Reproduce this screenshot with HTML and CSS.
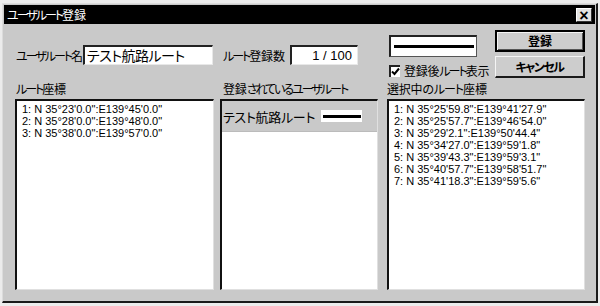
FILE: index.html
```html
<!DOCTYPE html>
<html lang="ja">
<head>
<meta charset="utf-8">
<link rel="stylesheet" href="styles.css">
</head>
<body>
<div class="window">
  <div class="titlebar">
    <span class="title"><span class="kana">ユーザルート</span>登録</span>
    <span class="close">×</span>
  </div>
  <div class="content">
    <div class="top">
      <div class="col col1 field">
        <span class="label"><span class="kana">ユーザルート</span>名</span>
        <div class="input name-input">テスト航路ルート</div>
      </div>
      <div class="col col2 field">
        <span class="label"><span class="kana">ルート</span>登録数</span>
        <div class="input count-input">1 / 100</div>
      </div>
      <div class="col col3 actions">
        <div class="preview-group">
          <div class="preview"><div class="line"></div></div>
          <label class="check"><span class="box">
            <svg width="9" height="9" viewBox="0 0 9 9"><path d="M1 4.5 L3.5 7 L8 1.5" fill="none" stroke="#000" stroke-width="2"/></svg>
          </span>登録後<span class="kana">ルート</span>表示</label>
        </div>
        <div class="buttons">
          <div class="btn default">登録</div>
          <div class="btn"><span class="kana-btn">キャンセル</span></div>
        </div>
      </div>
    </div>
    <div class="labels">
      <div class="col col1 label"><span class="kana">ルート</span>座標</div>
      <div class="col col2 label">登録<span class="kana">されているユーザルート</span></div>
      <div class="col col3 label">選択中の<span class="kana-soft">ルート</span>座標</div>
    </div>
    <div class="lists">
      <div class="col col1 list coords">
        <div>1: N 35°23'0.0":E139°45'0.0"</div>
        <div>2: N 35°28'0.0":E139°48'0.0"</div>
        <div>3: N 35°38'0.0":E139°57'0.0"</div>
      </div>
      <div class="col col2 list routes">
        <div class="route-item selected">
          <span class="route-name">テスト航路ルート</span>
          <span class="swatch"><span class="swatch-line"></span></span>
        </div>
      </div>
      <div class="col col3 list coords">
        <div>1: N 35°25'59.8":E139°41'27.9"</div>
        <div>2: N 35°25'57.7":E139°46'54.0"</div>
        <div>3: N 35°29'2.1":E139°50'44.4"</div>
        <div>4: N 35°34'27.0":E139°59'1.8"</div>
        <div>5: N 35°39'43.3":E139°59'3.1"</div>
        <div>6: N 35°40'57.7":E139°58'51.7"</div>
        <div>7: N 35°41'18.3":E139°59'5.6"</div>
      </div>
    </div>
  </div>
</div>
</body>
</html>
```

FILE: styles.css
```css
html, body {
  margin: 0;
  padding: 0;
}
body {
  background: #ececec;
  font-family: "Noto Sans CJK JP", "Liberation Sans", sans-serif;
  font-size: 12px;
  color: #000;
  width: 600px;
  height: 306px;
  overflow: hidden;
}
.window {
  box-sizing: border-box;
  margin: 3px 0 0 2px;
  width: 596px;
  height: 300px;
  background: #c9c9c9;
  border-left: 1px solid #dcdcdc;
  border-top: 1px solid #dcdcdc;
  border-right: 2px solid #1a1a1a;
  border-bottom: 2px solid #1a1a1a;
}
.titlebar {
  margin: 1px 1px 0 1px;
  height: 19px;
  background: #000;
  color: #fff;
  display: flex;
  align-items: center;
  justify-content: space-between;
  padding: 0 3px 0 3px;
}
.title {
  font-feature-settings: "palt";
  font-size: 12px;
  line-height: 18px;
}
.kana {
  letter-spacing: -2px;
}
.kana-soft {
  letter-spacing: -1px;
}
.kana-btn {
  letter-spacing: -1.5px;
}
.close {
  box-sizing: border-box;
  width: 16px;
  height: 14px;
  background: #e2e2e2;
  color: #000;
  font-family: "Liberation Sans", sans-serif;
  font-weight: bold;
  font-size: 16px;
  line-height: 13px;
  text-align: center;
  border-top: 1px solid #fff;
  border-left: 1px solid #fff;
  border-right: 1px solid #333;
  border-bottom: 1px solid #333;
}
.content {
  padding: 6px 0 0 12px;
}
.top, .labels, .lists {
  display: flex;
}
.col1 { width: 199px; }
.col2 { width: 158px; margin-left: 6px; }
.col3 { width: 198px; margin-left: 9px; }
.top { height: 48px; }
.label {
  font-feature-settings: "palt";
  white-space: nowrap;
  letter-spacing: -0.2px;
}
.field {
  display: flex;
  align-items: center;
  margin-top: 15px;
  height: 20px;
}
.col1.field .label { margin-left: 1px; }
.col1.field .input { margin-left: auto; margin-right: 1px; }
.col2.field .label { margin-left: 3px; }
.col2.field .input { margin-left: auto; margin-right: 20px; }
.input {
  box-sizing: border-box;
  height: 20px;
  background: #fff;
  border-top: 2px solid #222;
  border-left: 2px solid #222;
  border-right: 1px solid #e8e8e8;
  border-bottom: 1px solid #e8e8e8;
  white-space: nowrap;
}
.name-input {
  width: 131px;
  font-size: 14px;
  line-height: 17px;
  padding-left: 2px;
  letter-spacing: -0.5px;
  font-feature-settings: "palt";
}
.count-input {
  width: 68px;
  text-align: right;
  font-family: "Liberation Sans", sans-serif;
  font-size: 13px;
  line-height: 17px;
  padding-right: 5px;
}
.actions {
  display: flex;
  justify-content: space-between;
}
.preview-group {
  margin-left: 2px;
  margin-top: 5px;
  width: 96px;
}
.preview {
  box-sizing: border-box;
  width: 88px;
  height: 22px;
  background: #fff;
  border-top: 2px solid #222;
  border-left: 2px solid #222;
  border-right: 1px solid #555;
  border-bottom: 1px solid #555;
  display: flex;
  align-items: center;
  justify-content: center;
}
.line {
  width: 80px;
  height: 3px;
  background: #000;
}
.check {
  display: flex;
  align-items: center;
  margin-top: 5px;
  font-feature-settings: "palt";
  letter-spacing: -0.2px;
  white-space: nowrap;
}
.box {
  box-sizing: border-box;
  width: 12px;
  height: 12px;
  background: #fff;
  border-top: 2px solid #222;
  border-left: 2px solid #222;
  margin-right: 4px;
  display: flex;
  align-items: center;
  justify-content: center;
}
.buttons {
  display: flex;
  flex-direction: column;
  gap: 4px;
  width: 90px;
}
.btn {
  box-sizing: border-box;
  height: 22px;
  background: #cdcdcd;
  border-top: 1px solid #f4f4f4;
  border-left: 1px solid #f4f4f4;
  border-right: 2px solid #1a1a1a;
  border-bottom: 2px solid #1a1a1a;
  text-align: center;
  line-height: 19px;
  font-weight: bold;
  font-feature-settings: "palt";
}
.btn.default {
  border: 2px solid #000;
  box-shadow: inset 1px 1px 0 #f4f4f4, inset -1px -1px 0 #555;
  line-height: 18px;
}
.labels {
  height: 21px;
  align-items: center;
}
.labels .col1 { padding-left: 1px; box-sizing: border-box; }
.labels .col2 { padding-left: 3px; box-sizing: border-box; }
.lists { height: 191px; }
.list {
  box-sizing: border-box;
  height: 191px;
  background: #fff;
  border-top: 2px solid #111;
  border-left: 2px solid #111;
  border-right: 1px solid #e0e0e0;
  border-bottom: 1px solid #e0e0e0;
}
.coords {
  padding: 2px 0 0 5px;
  font-family: "Liberation Sans", sans-serif;
  font-size: 11px;
  line-height: 12px;
  white-space: nowrap;
}
.routes { padding: 0; }
.route-item {
  display: flex;
  align-items: center;
  height: 30px;
  padding-left: 1px;
  background: #c9c9c9;
  border-bottom: 1px solid #bbb;
}
.route-name {
  font-size: 13px;
  font-feature-settings: "palt";
  letter-spacing: -0.3px;
  width: 98px;
  white-space: nowrap;
}
.swatch {
  width: 41px;
  height: 12px;
  background: #fff;
  display: flex;
  align-items: center;
  justify-content: center;
}
.swatch-line {
  width: 38px;
  height: 3px;
  background: #000;
}
```
